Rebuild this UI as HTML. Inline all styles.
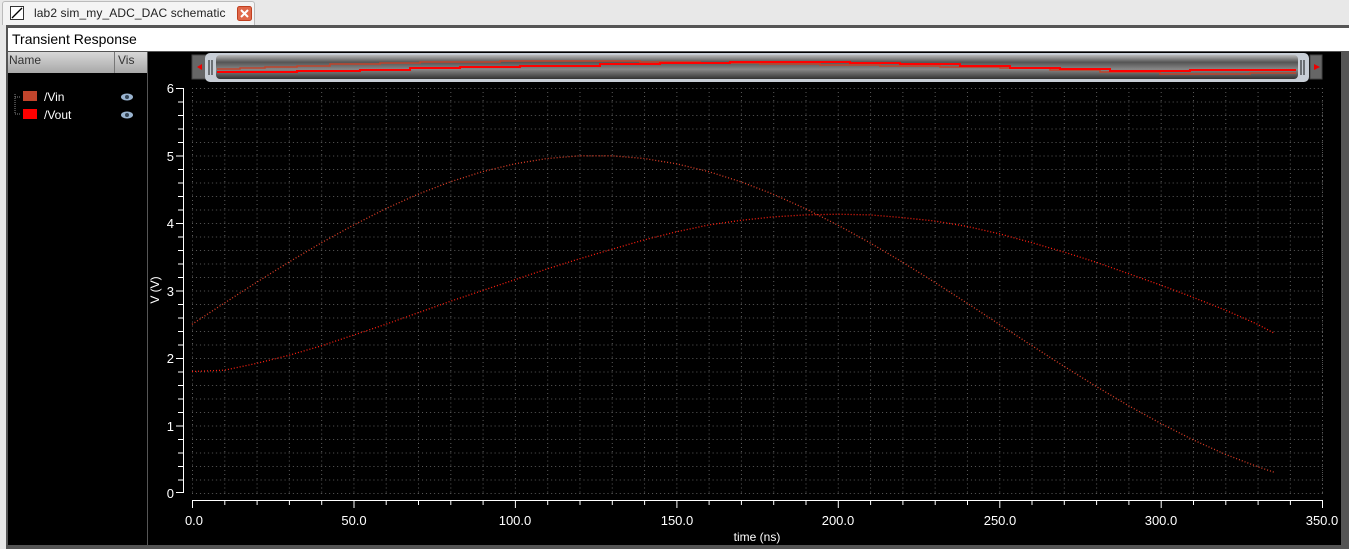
<!DOCTYPE html>
<html><head><style>
body{margin:0;width:1349px;height:549px;background:#e8e8e8;font-family:"Liberation Sans",sans-serif;overflow:hidden;position:relative}
.tab{position:absolute;left:2px;top:1px;width:251px;height:23px;background:#f4f4f4;border:1px solid #bbb;border-bottom:none;border-radius:3px 3px 0 0}
.frame{position:absolute;left:6px;top:25px;width:1343px;height:524px;background:#555}
.title{position:absolute;left:8px;top:28px;width:1341px;height:23px;background:#fff;font-size:14px;line-height:23px;padding-left:4px;box-sizing:border-box}
.left{position:absolute;left:8px;top:52px;width:139px;height:493px;background:#000}
.hdr{position:absolute;left:8px;top:52px;width:139px;height:21px;background:linear-gradient(#d8d8d8,#a8a8a8);font-size:12px;color:#333}
.plot{position:absolute;left:148px;top:52px;width:1193px;height:493px;background:#000}
</style></head><body>
<div class="tab">
<svg style="position:absolute;left:7px;top:4px" width="14" height="14"><rect x="0.5" y="0.5" width="13" height="13" fill="#fff" stroke="#333"/><line x1="2" y1="12" x2="12" y2="2" stroke="#000" stroke-width="1.3"/></svg>
<span style="position:absolute;left:31px;top:4px;font-size:12px;color:#222;letter-spacing:0.1px">lab2 sim_my_ADC_DAC schematic</span>
<svg style="position:absolute;left:234px;top:4px" width="15" height="15"><rect x="0.5" y="0.5" width="14" height="14" rx="2" fill="#e0684a" stroke="#c04020"/><path d="M4 4L11 11M11 4L4 11" stroke="#fff" stroke-width="2"/></svg>
</div>
<div class="frame"></div>
<div class="title">Transient Response</div>
<div class="left"></div>
<div class="hdr"><span style="position:absolute;left:1px;top:1px">Name</span><span style="position:absolute;left:106px;top:0;width:1px;height:21px;background:#777"></span><span style="position:absolute;left:110px;top:1px">Vis</span></div>
<svg style="position:absolute;left:8px;top:52px" width="139" height="100">
<path d="M7 42V62M7 45H13M7 62H13" stroke="#888" stroke-dasharray="1 1"/>
<rect x="15" y="39" width="14" height="10" fill="#c0442c"/>
<rect x="15" y="57" width="14" height="10" fill="#ff0000"/>
<text x="36" y="49" fill="#fff" font-size="12" font-family="Liberation Sans">/Vin</text>
<text x="36" y="67" fill="#fff" font-size="12" font-family="Liberation Sans">/Vout</text>
<ellipse cx="119" cy="45" rx="6" ry="3.5" fill="#9ab4d0"/><circle cx="119" cy="45" r="2" fill="#345"/>
<ellipse cx="119" cy="63" rx="6" ry="3.5" fill="#9ab4d0"/><circle cx="119" cy="63" r="2" fill="#345"/>
</svg>
<div class="plot"></div>
<svg style="position:absolute;left:0;top:0" width="1349" height="549" font-family="Liberation Sans">
<defs>
<linearGradient id="sb" x1="0" y1="0" x2="0" y2="1"><stop offset="0" stop-color="#bbb"/><stop offset=".3" stop-color="#555"/><stop offset=".6" stop-color="#888"/><stop offset="1" stop-color="#333"/></linearGradient>
<pattern id="g" x="192" y="88" width="32.29" height="13.5" patternUnits="userSpaceOnUse">
<line x1="0" y1="0.5" x2="32.29" y2="0.5" stroke="#5a5a5a" stroke-dasharray="1 3"/>
<line x1="0.5" y1="0" x2="0.5" y2="13.5" stroke="#5a5a5a" stroke-dasharray="1 3"/>
</pattern>
</defs>
<rect x="192" y="55" width="14" height="24" fill="#666" stroke="#444"/>
<path d="M197 67L202 64V70Z" fill="#e00"/>
<rect x="1310" y="55" width="12" height="24" fill="#666" stroke="#444"/>
<path d="M1320 67L1314 64V70Z" fill="#e00"/>
<rect x="205" y="53" width="1104" height="29" rx="5" fill="#c8ced6"/>
<rect x="216" y="55" width="1082" height="24" rx="4" fill="url(#sb)"/>
<path d="M209 60V75M212 60V75M1301 60V75M1304 60V75" stroke="#111" stroke-width="1"/>
<path d="M217 69H240V68H265V67H297V66H330V64H380V63H420V62H500V61H560V61H640V62H700V63H760V64H820V65H880V66H940V67H1000V68H1050V70H1100V72H1160V74H1250V73H1296" stroke="#c0442c" fill="none" stroke-width="1.5"/>
<path d="M217 72H297V71H360V70H410V68H460V67H520V66H600V64H660V63H730V62H800V62H850V63H900V64H960V66H1010V68H1060V69H1110V71H1190V70H1296" stroke="#ff0000" stroke-width="2" fill="none"/>
<rect x="192" y="88" width="1131" height="406" fill="url(#g)"/>
<line x1="1322.5" y1="88" x2="1322.5" y2="494" stroke="#5a5a5a" stroke-dasharray="1 3"/>
<g stroke="#fff" stroke-width="1">
<line x1="183.5" y1="88" x2="183.5" y2="493"/>
<path d="M176 88.5H184M178 102H184M178 115.5H184M178 129H184M178 142.5H184M176 156H184M178 169.5H184M178 183H184M178 196.5H184M178 210H184M176 223.5H184M178 237H184M178 250.5H184M178 264H184M178 277.5H184M176 291H184M178 304.5H184M178 318H184M178 331.5H184M178 345H184M176 358.5H184M178 372H184M178 385.5H184M178 399H184M178 412.5H184M176 426H184M178 439.5H184M178 453H184M178 466.5H184M178 480H184M176 492.5H184"/>
<line x1="192" y1="500.5" x2="1323" y2="500.5"/>
<path d="M192.5 500V508M224.8 500V505M257.1 500V505M289.4 500V505M321.7 500V505M354 500V508M386.2 500V505M418.5 500V505M450.8 500V505M483.1 500V505M515.4 500V508M547.7 500V505M580 500V505M612.3 500V505M644.6 500V505M676.9 500V508M709.1 500V505M741.4 500V505M773.7 500V505M806 500V505M838.3 500V508M870.6 500V505M902.9 500V505M935.2 500V505M967.5 500V505M999.8 500V508M1032 500V505M1064.3 500V505M1096.6 500V505M1128.9 500V505M1161.2 500V508M1193.5 500V505M1225.8 500V505M1258.1 500V505M1290.4 500V505M1322.5 500V508"/>
</g>
<g fill="#fff" font-size="13" text-anchor="end">
<text x="174" y="93">6</text><text x="174" y="161">5</text><text x="174" y="228">4</text><text x="174" y="296">3</text><text x="174" y="363">2</text><text x="174" y="431">1</text><text x="174" y="498">0</text>
</g>
<g fill="#fff" font-size="13" text-anchor="middle">
<text x="194" y="525">0.0</text><text x="354" y="525">50.0</text><text x="515" y="525">100.0</text><text x="677" y="525">150.0</text><text x="838" y="525">200.0</text><text x="1000" y="525">250.0</text><text x="1161" y="525">300.0</text><text x="1322" y="525">350.0</text>
<text x="757" y="541" font-size="12">time (ns)</text>
<text transform="translate(159 290) rotate(-90)" font-size="12">V (V)</text>
</g>
<polyline fill="none" stroke="#e04028" stroke-width="1.3" stroke-dasharray="1 2" points="192,324.3 224.3,303.1 256.6,282.3 288.9,262.1 321.2,242.9 353.5,225.1 385.7,208.7 418,194.2 450.3,181.8 482.6,171.6 514.9,163.8 547.2,158.5 579.5,155.8 611.8,155.8 644.1,158.5 676.4,163.8 708.6,171.6 740.9,181.8 773.2,194.2 805.5,208.7 837.8,225.1 870.1,242.9 902.4,262.1 934.7,282.3 967,303.1 999.3,324.3 1031.5,345.4 1063.8,366.2 1096.1,386.4 1128.4,405.6 1160.7,423.4 1193,439.8 1225.3,454.3 1257.6,466.7 1273.7,472.1"/>
<polyline fill="none" stroke="#ff2010" stroke-width="1.3" stroke-dasharray="1 2" points="192,371.5 224.3,370.2 256.6,363.4 288.9,355.3 321.2,345.9 353.5,335.1 385.7,324.3 418,312.8 450.3,301.3 482.6,290.5 514.9,279.7 547.2,268.9 579.5,258.8 611.8,249.3 644.1,239.9 676.4,231.8 708.6,225 740.9,220.3 773.2,216.9 805.5,214.9 837.8,214.2 870.1,214.9 902.4,217.6 934.7,221 967,226.4 999.3,233.8 1031.5,242.6 1063.8,252 1096.1,262.2 1128.4,273.6 1160.7,285.1 1193,297.3 1225.3,310.1 1257.6,324.3 1273.7,333"/>
</svg>
</body></html>
